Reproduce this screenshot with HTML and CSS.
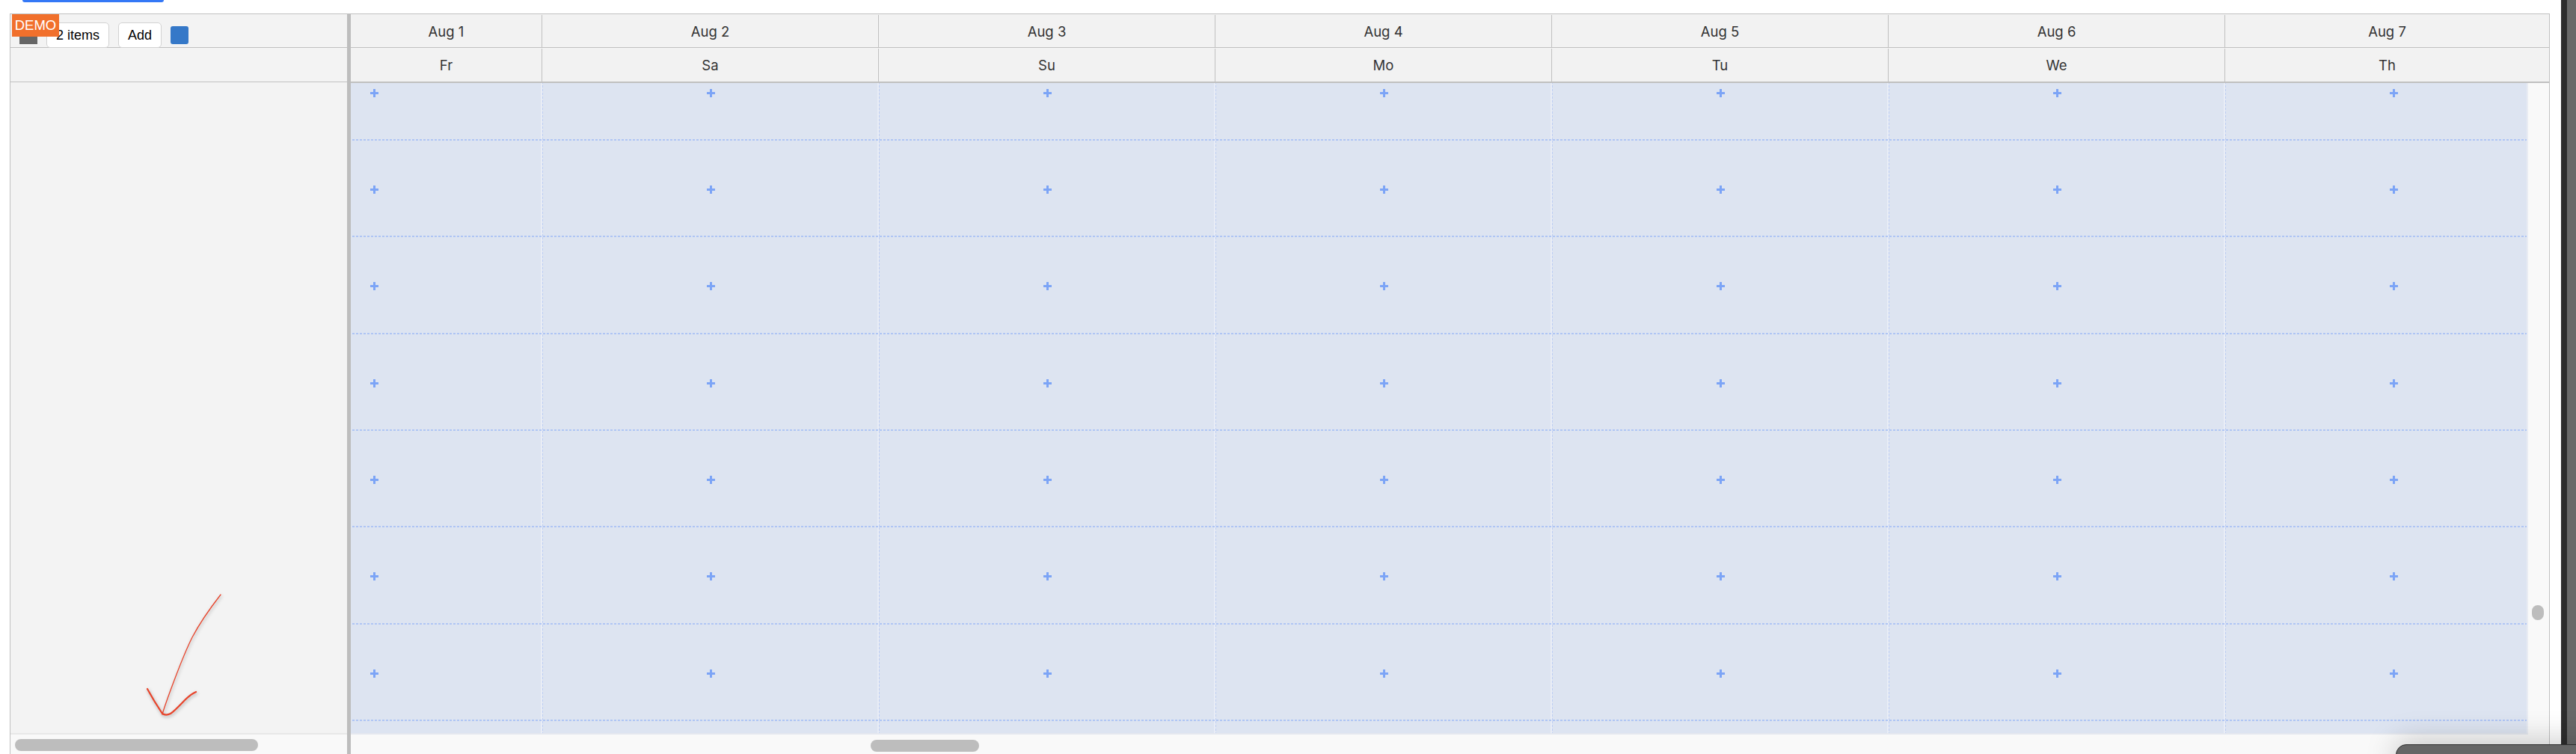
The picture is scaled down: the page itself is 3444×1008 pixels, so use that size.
FILE: index.html
```html
<!DOCTYPE html>
<html lang="en">
<head>
<meta charset="utf-8">
<title>Scheduler</title>
<link rel="stylesheet" href="styles.css">
</head>
<body>
<div class="page">
  <main class="main">
    <div class="topbar"></div>
    <div class="scheduler">
      <aside class="left">
        <div class="toolbar">
          <span class="square"></span>
          <button class="btn items">2 items</button>
          <button class="btn add">Add</button>
          <span class="blue"></span>
        </div>
        <div class="left-sub"></div>
        <div class="left-body"></div>
        <div class="left-scroll"><div class="hthumb lthumb"></div></div>
      </aside>
      <div class="splitter"></div>
      <section class="timeline">
        <div class="hrow first">
          <div class="hcell c1">Aug 1</div><div class="hcell">Aug 2</div><div class="hcell">Aug 3</div><div class="hcell">Aug 4</div><div class="hcell">Aug 5</div><div class="hcell">Aug 6</div><div class="hcell last">Aug 7</div>
        </div>
        <div class="hrow second">
          <div class="hcell c1">Fr</div><div class="hcell">Sa</div><div class="hcell">Su</div><div class="hcell">Mo</div><div class="hcell">Tu</div><div class="hcell">We</div><div class="hcell last">Th</div>
        </div>
        <div class="content">
          <div class="viewport">
            <div class="grid">
              <div class="cell"><i></i></div><div class="cell"><i></i></div><div class="cell"><i></i></div><div class="cell"><i></i></div><div class="cell"><i></i></div><div class="cell"><i></i></div><div class="cell"><i></i></div>
              <div class="cell"><i></i></div><div class="cell"><i></i></div><div class="cell"><i></i></div><div class="cell"><i></i></div><div class="cell"><i></i></div><div class="cell"><i></i></div><div class="cell"><i></i></div>
              <div class="cell"><i></i></div><div class="cell"><i></i></div><div class="cell"><i></i></div><div class="cell"><i></i></div><div class="cell"><i></i></div><div class="cell"><i></i></div><div class="cell"><i></i></div>
              <div class="cell"><i></i></div><div class="cell"><i></i></div><div class="cell"><i></i></div><div class="cell"><i></i></div><div class="cell"><i></i></div><div class="cell"><i></i></div><div class="cell"><i></i></div>
              <div class="cell"><i></i></div><div class="cell"><i></i></div><div class="cell"><i></i></div><div class="cell"><i></i></div><div class="cell"><i></i></div><div class="cell"><i></i></div><div class="cell"><i></i></div>
              <div class="cell"><i></i></div><div class="cell"><i></i></div><div class="cell"><i></i></div><div class="cell"><i></i></div><div class="cell"><i></i></div><div class="cell"><i></i></div><div class="cell"><i></i></div>
              <div class="cell"><i></i></div><div class="cell"><i></i></div><div class="cell"><i></i></div><div class="cell"><i></i></div><div class="cell"><i></i></div><div class="cell"><i></i></div><div class="cell"><i></i></div>
              <div class="cell"><i></i></div><div class="cell"><i></i></div><div class="cell"><i></i></div><div class="cell"><i></i></div><div class="cell"><i></i></div><div class="cell"><i></i></div><div class="cell"><i></i></div>
            </div>
          </div>
          <div class="vscroll"><div class="vthumb"></div></div>
        </div>
        <div class="bottom-scroll"><div class="hthumb rthumb"></div></div>
      </section>
    </div>
  </main>
  <div class="edge-dark"></div>
  <div class="edge-gray"></div>

  <div class="demo">DEMO</div>
  <svg class="arrow" width="120" height="175" viewBox="190 790 120 175" fill="none" stroke="#e8432a" stroke-linecap="round" stroke-linejoin="round">
    <path stroke-width="1.3" d="M295 795C281 813 267 833 257 852C247 872 238 896 232 912C226 928 220 944 217 955"/>
    <path stroke-width="2.2" d="M197 921C203 932 211 945 217 954C220 956 224 956 228 954C234 950 241 942 247 936C252 931 257 927 262 925"/>
  </svg>
  <div class="dock"></div>
</div>
</body>
</html>
```

FILE: styles.css
```css
* { box-sizing: border-box; }
html, body { margin: 0; padding: 0; background: #fff; }
body { font-family: "Liberation Sans", Arial, sans-serif; color: #333; }

.page { position: relative; display: flex; width: 3444px; height: 1008px; overflow: hidden; }

.main { width: 3424px; padding-left: 13px; display: flex; flex-direction: column; }
.topbar { width: 189px; height: 3px; margin-left: 17px; background: #3478f6; border-radius: 0 0 5px 5px; }

.scheduler {
  width: 3396px; height: 990px; margin-top: 15px;
  display: flex;
  border: 1px solid #c0c0c0; border-bottom: 0;
  background: #f3f3f3;
}

.edge-dark { width: 8px; background: #2d2d2d; }
.edge-gray { width: 12px; background: #696969; }

/* left pane */
.left { width: 450px; display: flex; flex-direction: column; }
.toolbar {
  height: 45px; padding: 11px 0 0 12px;
  display: flex; align-items: flex-start;
  border-bottom: 1px solid #c0c0c0;
}
.square { width: 24px; height: 24px; margin-top: 5px; background: #666; }
.btn {
  height: 34px; padding: 0; background: #fff;
  border: 1px solid #d2d2d2; border-radius: 5px;
  font: 18px "Liberation Sans", Arial, sans-serif; color: #000;
}
.items { width: 84px; margin-left: 12px; }
.add { width: 58px; margin-left: 12px; }
.blue { width: 24px; height: 24px; margin: 5px 0 0 12px; background: #3578c8; border-radius: 3px; }
.left-sub { height: 46px; border-bottom: 1px solid #c0c0c0; }
.left-body { flex: 1; border-bottom: 2px solid #e8e8e8; }
.left-scroll { height: 26px; padding: 6px 0 0 6px; background: #f9f9f9; }

.hthumb { height: 16px; background: #bdbdbd; border-radius: 8px; }
.lthumb { width: 325px; }

.splitter { width: 5px; background: #bdbdbd; }

/* timeline */
.timeline { width: 2939px; display: flex; flex-direction: column; }
.hrow { display: flex; border-bottom: 1px solid #c0c0c0; background: #f2f2f2; }
.hrow.first { height: 45px; padding-top: 1px; }
.hrow.second { height: 47px; border-bottom-width: 2px; padding-top: 1px; }
.hcell {
  width: 450px; display: flex; align-items: center; justify-content: center;
  border-right: 1px solid #c0c0c0;
  font-family: Inter, "Liberation Sans", sans-serif;
  font-size: 18.5px; color: #333;
}
.hcell.c1 { width: 256px; }
.hcell.last { flex: 1; border-right: 0; }

.content { height: 871px; display: flex; background: #f9f9f9; }
.viewport {
  width: 2911px; height: 871px; overflow: hidden; background: #e6e9f2;
  border-right: 2px solid #e9ecf3; border-bottom: 2px solid #e5e8ef;
}
.grid {
  display: grid;
  grid-template-columns: repeat(7, 450px);
  grid-auto-rows: 129.33px;
  margin: -52.33px 0 0 -193px;
}
.cell {
  display: flex; align-items: center; justify-content: center; padding: 2px 1px 0 0;
  background-color: #dde4f1;
  background-image:
    repeating-linear-gradient(90deg, #afc5f4 0 3px, transparent 3px 5px),
    repeating-linear-gradient(180deg, #bccdf3 0 3px, transparent 3px 5px),
    linear-gradient(#e9edf6, #e9edf6);
  background-repeat: no-repeat;
  background-size: 100% 2px, 1px 100%, 2px 100%;
  background-position: left bottom, right top, calc(100% - 1px) top;
}
.cell i {
  display: block; width: 11px; height: 11px;
  background:
    linear-gradient(#7ca4f6, #7ca4f6) center / 11px 3px no-repeat,
    linear-gradient(#7ca4f6, #7ca4f6) center / 3px 11px no-repeat;
}

.vscroll { width: 26px; padding: 698px 0 0 5px; }
.vthumb { width: 16px; height: 20px; background: #bdbdbd; border-radius: 8px; }

.bottom-scroll { height: 26px; padding: 7px 0 0 695px; background: #f9f9f9; }
.rthumb { width: 145px; }

/* overlays */
.demo {
  position: absolute; left: 16px; top: 19px;
  width: 63px; height: 30px;
  background: #f1702c; color: #fff;
  font-size: 18.5px; line-height: 30px; text-align: center;
}
.arrow { position: absolute; left: 190px; top: 790px; filter: drop-shadow(1px 2px 2px rgba(0,0,0,.3)); }
.dock {
  position: absolute; left: 3203px; top: 995px; width: 300px; height: 40px;
  background: #666; border: 1px solid #2d2d2d; border-radius: 14px 0 0 0;
  box-shadow: 0 -4px 40px rgba(0,0,0,.22);
}
```
